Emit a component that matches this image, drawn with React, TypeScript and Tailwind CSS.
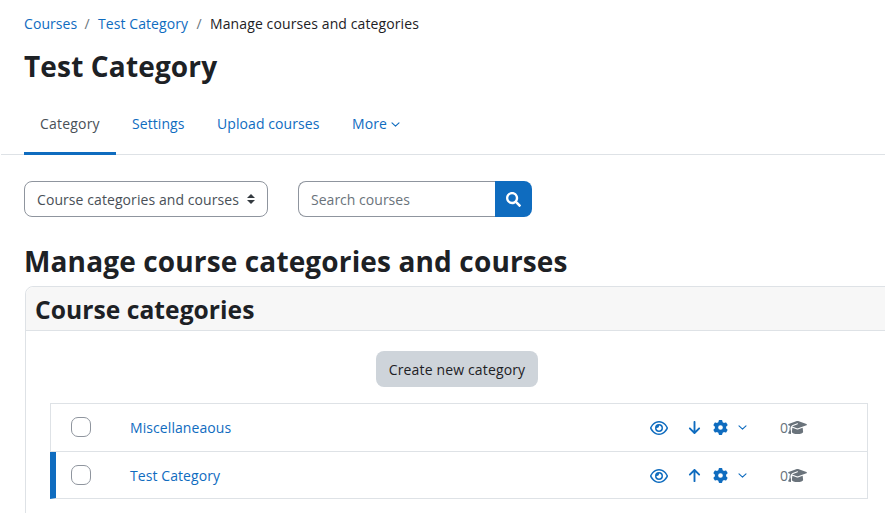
import React from 'react';
import { FaSearch } from 'react-icons/fa';
import { FaArrowDown, FaArrowUp, FaGear, FaGraduationCap, FaRegEye } from 'react-icons/fa6';

interface Category {
  id: number;
  name: string;
  courses: number;
  selected: boolean;
}

const categories: Category[] = [
  { id: 1, name: 'Miscellaneaous', courses: 0, selected: false },
  { id: 2, name: 'Test Category', courses: 0, selected: true },
];

function Chevron({ className }: { className?: string }) {
  return (
    <svg viewBox="0 0 9 9" className={`h-[9px] w-[9px] fill-none stroke-current ${className ?? ''}`}>
      <path d="M1 2.8L4.5 6.2L8 2.8" strokeWidth="1.1" strokeLinecap="round" strokeLinejoin="round" />
    </svg>
  );
}

function Breadcrumb() {
  return (
    <nav className="flex h-[22px] items-center whitespace-nowrap">
      <a href="#" className="w-[52px] text-[#0f6cbf]">Courses</a>
      <span className="w-[22px] text-center text-[#6a737b]">/</span>
      <a href="#" className="w-[90px] text-[#0f6cbf]">Test Category</a>
      <span className="w-[22px] text-center text-[#6a737b]">/</span>
      <span className="tracking-[0.11px]">Manage courses and categories</span>
    </nav>
  );
}

function Tabs() {
  return (
    <div className="ml-px mt-[9px] flex h-[61px] border-b border-[#dee2e6] pl-[23px] whitespace-nowrap">
      <a href="#" className="-mb-px flex w-[92px] items-center border-b-[3px] border-[#0f6cbf] pl-4 pt-0.5 tracking-[0.2px] text-[#495057]">
        Category
      </a>
      <a href="#" className="flex w-[86px] items-center pl-4 text-[#0f6cbf]">Settings</a>
      <a href="#" className="flex w-[134px] items-center pl-[15px] text-[#0f6cbf]">Upload courses</a>
      <a href="#" className="flex items-center pl-4 text-[#0f6cbf]">
        <span className="w-[39px]">More</span>
        <Chevron />
      </a>
    </div>
  );
}

function Toolbar() {
  return (
    <div className="mt-[26px] flex h-9 pl-6 whitespace-nowrap">
      <button className="flex w-[244px] items-center justify-between rounded-lg border border-[#8f959e] pl-3 pr-3 text-[#495057]">
        <span className="pt-0.5">Course categories and courses</span>
        <svg viewBox="0 0 4 5" className="h-2.5 w-2 fill-[#343a40]">
          <path d="M2 0L0 2h4zm0 5L0 3h4z" />
        </svg>
      </button>
      <div className="ml-[30px] flex">
        <input
          type="text"
          placeholder="Search courses"
          className="w-[197px] rounded-l-lg border border-r-0 border-[#8f959e] px-3 pt-0.5 tracking-[0.02px] placeholder:text-[#6a737b]"
        />
        <button className="flex w-[37px] items-center justify-center rounded-r-lg bg-[#0f6cbf] text-white">
          <FaSearch className="h-[15px] w-[15px]" />
        </button>
      </div>
    </div>
  );
}

function CategoryRow({ category }: { category: Category }) {
  return (
    <li
      className={`flex items-center border-b border-[#dee2e6] text-[#0f6cbf] ${
        category.selected ? 'h-[47px] border-l-[6px] border-l-[#0f6cbf] pl-[15px] pt-px' : 'h-12 border-l pl-5'
      }`}
    >
      <span className="mb-0.5 h-5 w-5 rounded-[7px] border border-[#8f959e]" />
      <a href="#" className="ml-[39px] whitespace-nowrap">{category.name}</a>
      <div className="ml-auto flex w-[217px] items-center">
        <FaRegEye className="h-4 w-[18px]" />
        <span className="ml-5 flex w-[13px] justify-center">
          {category.selected ? <FaArrowUp className="h-[15px] w-[15px]" /> : <FaArrowDown className="h-[15px] w-[15px]" />}
        </span>
        <FaGear className="ml-3 h-[15px] w-[15px]" />
        <Chevron className="ml-2.5" />
        <span className="ml-[33px] flex items-center text-[#6a737b]">
          <span className="w-2">{category.courses}</span>
          <FaGraduationCap className="h-[15px] w-[19px]" />
        </span>
      </div>
    </li>
  );
}

export default function App() {
  return (
    <div className="h-[513px] overflow-hidden bg-white font-['Open_Sans',sans-serif] text-[14px] leading-[22px] tracking-[0.08px] text-[#1d2125]">
      <div className="pl-6 pt-[13px]">
        <Breadcrumb />
        <h1 className="mt-3 text-[28px] font-bold leading-[38px] tracking-[0.15px]">Test Category</h1>
      </div>
      <Tabs />
      <Toolbar />
      <h2 className="ml-6 mt-[25px] text-[28px] font-bold leading-[38px] tracking-[0.14px] whitespace-nowrap">
        Manage course categories and courses
      </h2>
      <section className="ml-[25px] mt-[6px] h-[240px] w-[869px] rounded-t-lg border border-[#dee2e6]">
        <h3 className="h-11 rounded-t-lg border-b border-[#dee2e6] bg-[#f7f7f7] pl-[9px] pt-1 text-[24.6px] font-bold leading-[38px] tracking-[0.05px]">
          Course categories
        </h3>
        <div className="flex pl-[350px] pt-5">
          <button className="h-9 w-[162px] rounded-lg bg-[#ced4da] pt-0.5 tracking-[0.15px] whitespace-nowrap">
            Create new category
          </button>
        </div>
        <ul className="ml-6 mt-4 w-[818px] border-r border-t border-[#dee2e6]">
          {categories.map((category) => (
            <CategoryRow key={category.id} category={category} />
          ))}
        </ul>
      </section>
    </div>
  );
}
